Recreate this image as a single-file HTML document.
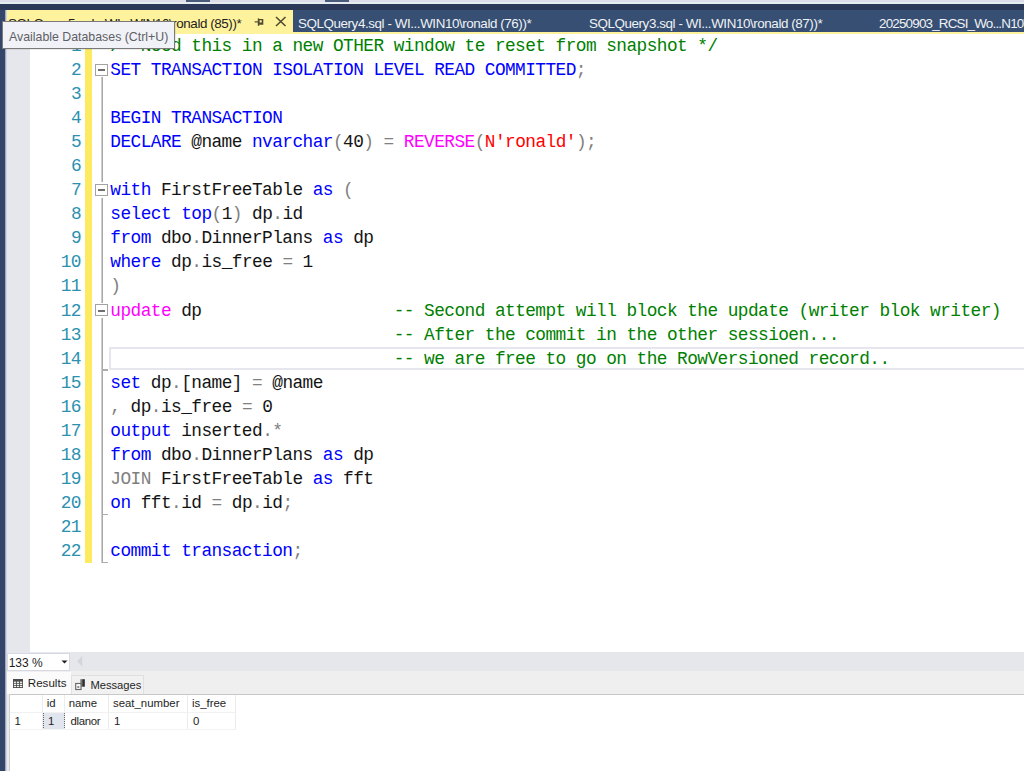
<!DOCTYPE html>
<html><head><meta charset="utf-8">
<style>
*{margin:0;padding:0;box-sizing:border-box}
html,body{width:1024px;height:771px;overflow:hidden;background:#fff;position:relative;font-family:"Liberation Sans",sans-serif}
.abs{position:absolute}
#topstrip{left:0;top:0;width:1024px;height:3px;background:#dcdde9}
#topline{left:0;top:2px;width:1024px;height:1.5px;background:#e6ebef}
#well{left:0;top:3.5px;width:1024px;height:6px;background:#2b3857}
#tabs{left:0;top:9.5px;width:1024px;height:22px;background:#364f72}
#ybar{left:0;top:31.5px;width:1024px;height:2px;background:#fff29d}
#leftdark{left:0;top:9.5px;width:7px;height:762px;background:linear-gradient(to right,#33466a 0,#33466a 4.6px,#a9b5ca 5.6px,#e6e7ec 7px)}
#acttab{left:5px;top:9.5px;width:287.5px;height:22px;background:#fff29d}
.tabtxt{font-size:13.4px;letter-spacing:-0.42px;top:15.6px;white-space:nowrap;color:#f0f2f6}
#margin{left:7px;top:33.5px;width:23px;height:619px;background:#e6e7ec}
.ln{position:absolute;left:30px;width:51px;text-align:right;color:#2b91af}
.code{position:absolute;left:110.3px;white-space:pre;color:#141414}
.mono{font-family:"Liberation Mono",monospace;font-size:17.8px;letter-spacing:-0.55px;line-height:24.06px;height:24.06px}
.k{color:#0000ff}.g{color:#808080}.c{color:#008000}.f{color:#ff00ff}.s{color:#ff0000}
#yellow{left:84.5px;top:33.5px;width:7.5px;height:529.3px;background:#fdea60}
.vline{position:absolute;left:101px;width:2px;border-left:1px solid #cdcdcd;background:#a9a9a9}
.tick{position:absolute;left:102px;width:6px;height:1.4px;background:#adadad}
.box{position:absolute;left:95px;width:13px;height:12px;border:1px solid #a3a3a3;background:#fff}
.box::after{content:"";position:absolute;left:2px;top:4.3px;width:7px;height:2px;background:#707070}
#curline{left:108.8px;top:346.5px;width:920px;height:23.5px;border:2px solid #e6e6ee}
#tooltip{left:1.5px;top:21.3px;width:173.5px;height:27.8px;border-bottom:1.5px solid #6e6e6e;background:#f1f2f7;border:1px solid #7a7a7a;box-shadow:1px 1px 0 rgba(0,0,0,.08)}
#tooltip span{position:absolute;left:6.5px;top:7.8px;font-size:12.35px;color:#5f5f66;white-space:nowrap}
#status{left:6.5px;top:652.2px;width:1018px;height:19px;background:#e5e7eb}
#zoombox{left:7px;top:652.5px;width:62.5px;height:18px;background:#fff;border:1px solid #d6d8e4}
#zoombox span{position:absolute;left:0.7px;top:2.3px;font-size:12px;color:#1e1e1e}
#tabrow{left:6.5px;top:671px;width:1018px;height:23px;background:#efefef}
#restab{left:7px;top:672px;width:64px;height:22.5px;background:#fbfbfb}
#msgtab{left:71.2px;top:675.3px;width:73px;height:19px;background:#f1f1f1;border:1px solid #e0e0e0;border-bottom:none}
#gridline{left:9px;top:694px;width:1015px;height:1.3px;background:#c8c8c8}
#gridleft{left:6.5px;top:694px;width:3px;height:77px;background:#e9eaee}
#gridleftb{left:9px;top:694px;width:1px;height:77px;background:#cfcfcf}
.gt{position:absolute;font-size:11.4px;color:#1e1e1e;white-space:nowrap}
.gsep{position:absolute;width:1px;background:#ececec}
</style></head><body>
<div id="topstrip" class="abs"></div>
<div id="topline" class="abs"></div>
<div id="well" class="abs"></div>
<div class="abs" style="left:186px;top:0;width:24px;height:2px;background:#4a5a7a"></div>
<div class="abs" style="left:325px;top:0;width:24px;height:2px;background:#4a5a7a"></div>
<div id="tabs" class="abs"></div>
<div id="acttab" class="abs"></div>
<div id="ybar" class="abs"></div>
<div class="abs tabtxt" style="left:8px;color:#1e1e1e">SQLQuery5.sql - WI...WIN10\ronald (85))*</div>
<div class="abs tabtxt" style="left:298px">SQLQuery4.sql - WI...WIN10\ronald (76))*</div>
<div class="abs tabtxt" style="left:589px">SQLQuery3.sql - WI...WIN10\ronald (87))*</div>
<div class="abs tabtxt" style="left:879px;letter-spacing:-0.8px">20250903_RCSI_Wo...N10\ronald (90))*</div>
<!-- pin & close -->
<svg class="abs" style="left:254px;top:18px" width="10" height="9" viewBox="0 0 10 9"><path fill-rule="evenodd" fill="#4f4a30" d="M4 1.1H9.3V6.7H4z M5.5 2.3H7.7V4.4H5.5z"/><rect x="3.8" y="0.4" width="1.4" height="7.4" fill="#4f4a30"/><rect x="0.7" y="3.3" width="3.3" height="1.2" fill="#4f4a30"/></svg>
<svg class="abs" style="left:275px;top:16px" width="12" height="11" viewBox="0 0 12 11"><path d="M1 1L10.5 10M10.5 1L1 10" stroke="#4f4a30" stroke-width="1.6" fill="none"/></svg>

<div id="leftdark" class="abs"></div>
<div id="margin" class="abs"></div>
<div id="yellow" class="abs"></div>

<div id="curline" class="abs"></div>
<div class="ln mono" style="top:34.00px">1</div>
<div class="code mono" style="top:34.00px"><span class="c">/* Need this in a new OTHER window te reset from snapshot */</span></div>
<div class="ln mono" style="top:58.00px">2</div>
<div class="code mono" style="top:58.00px"><span class="k">SET TRANSACTION ISOLATION LEVEL READ COMMITTED</span><span class="g">;</span></div>
<div class="ln mono" style="top:82.00px">3</div>
<div class="ln mono" style="top:106.00px">4</div>
<div class="code mono" style="top:106.00px"><span class="k">BEGIN TRANSACTION</span></div>
<div class="ln mono" style="top:130.00px">5</div>
<div class="code mono" style="top:130.00px"><span class="k">DECLARE</span> @name <span class="k">nvarchar</span><span class="g">(</span>40<span class="g">)</span><span class="g"> = </span><span class="f">REVERSE</span><span class="g">(</span><span class="s">N&#x27;ronald&#x27;</span><span class="g">)</span><span class="g">;</span></div>
<div class="ln mono" style="top:154.00px">6</div>
<div class="ln mono" style="top:178.00px">7</div>
<div class="code mono" style="top:178.00px"><span class="k">with</span> FirstFreeTable <span class="k">as</span><span class="g"> (</span></div>
<div class="ln mono" style="top:202.00px">8</div>
<div class="code mono" style="top:202.00px"><span class="k">select</span> <span class="k">top</span><span class="g">(</span>1<span class="g">)</span> dp<span class="g">.</span>id</div>
<div class="ln mono" style="top:226.00px">9</div>
<div class="code mono" style="top:226.00px"><span class="k">from</span> dbo<span class="g">.</span>DinnerPlans <span class="k">as</span> dp</div>
<div class="ln mono" style="top:250.00px">10</div>
<div class="code mono" style="top:250.00px"><span class="k">where</span> dp<span class="g">.</span>is_free <span class="g">=</span> 1</div>
<div class="ln mono" style="top:274.00px">11</div>
<div class="code mono" style="top:274.00px"><span class="g">)</span></div>
<div class="ln mono" style="top:299.00px">12</div>
<div class="code mono" style="top:299.00px"><span class="f">update</span> dp                   <span class="c">-- Second attempt will block the update (writer blok writer)</span></div>
<div class="ln mono" style="top:323.00px">13</div>
<div class="code mono" style="top:323.00px">                            <span class="c">-- After the commit in the other sessioen...</span></div>
<div class="ln mono" style="top:347.00px">14</div>
<div class="code mono" style="top:347.00px">                            <span class="c">-- we are free to go on the RowVersioned record..</span></div>
<div class="ln mono" style="top:371.00px">15</div>
<div class="code mono" style="top:371.00px"><span class="k">set</span> dp<span class="g">.</span>[name] <span class="g">=</span> @name</div>
<div class="ln mono" style="top:395.00px">16</div>
<div class="code mono" style="top:395.00px"><span class="g">,</span> dp<span class="g">.</span>is_free <span class="g">=</span> 0</div>
<div class="ln mono" style="top:419.00px">17</div>
<div class="code mono" style="top:419.00px"><span class="k">output</span> inserted<span class="g">.*</span></div>
<div class="ln mono" style="top:443.00px">18</div>
<div class="code mono" style="top:443.00px"><span class="k">from</span> dbo<span class="g">.</span>DinnerPlans <span class="k">as</span> dp</div>
<div class="ln mono" style="top:467.00px">19</div>
<div class="code mono" style="top:467.00px"><span class="g">JOIN</span> FirstFreeTable <span class="k">as</span> fft</div>
<div class="ln mono" style="top:491.00px">20</div>
<div class="code mono" style="top:491.00px"><span class="k">on</span> fft<span class="g">.</span>id <span class="g">=</span> dp<span class="g">.</span>id<span class="g">;</span></div>
<div class="ln mono" style="top:515.00px">21</div>
<div class="ln mono" style="top:539.00px">22</div>
<div class="code mono" style="top:539.00px"><span class="k">commit transaction</span><span class="g">;</span></div>
<div class="vline" style="top:77.20px;height:105.30px"></div>
<div class="vline" style="top:197.50px;height:105.30px"></div>
<div class="vline" style="top:317.80px;height:245.02px"></div>
<div class="tick" style="top:369.34px"></div>
<div class="tick" style="top:513.70px"></div>
<div class="tick" style="top:561.82px"></div>
<div class="box" style="top:63.70px"></div>
<div class="box" style="top:184.00px"></div>
<div class="box" style="top:304.30px"></div>
<div id="tooltip" class="abs"><span>Available Databases (Ctrl+U)</span></div>
<div id="status" class="abs"></div>
<div id="zoombox" class="abs"><span>133 %</span></div>
<svg class="abs" style="left:61px;top:659px" width="8" height="6" viewBox="0 0 8 6"><path d="M0.5 1.5h6l-3 3z" fill="#1e1e1e"/></svg>
<svg class="abs" style="left:76px;top:655px" width="8" height="12" viewBox="0 0 8 12"><path d="M6.2 1v10.5l-5.2-5.25z" fill="#d3d5dc"/></svg>
<div id="tabrow" class="abs"></div>
<div id="restab" class="abs"></div>
<div id="msgtab" class="abs"></div>
<svg class="abs" style="left:13px;top:678.5px" width="11" height="10" viewBox="0 0 11 10"><rect x="0" y="0" width="10" height="9" fill="#4a4a4a"/><rect x="0.90" y="2.60" width="2.2" height="1.3" fill="#f4f4f4"/><rect x="3.95" y="2.60" width="2.2" height="1.3" fill="#f4f4f4"/><rect x="7.00" y="2.60" width="2.2" height="1.3" fill="#f4f4f4"/><rect x="0.90" y="4.70" width="2.2" height="1.3" fill="#f4f4f4"/><rect x="3.95" y="4.70" width="2.2" height="1.3" fill="#f4f4f4"/><rect x="7.00" y="4.70" width="2.2" height="1.3" fill="#f4f4f4"/><rect x="0.90" y="6.80" width="2.2" height="1.3" fill="#f4f4f4"/><rect x="3.95" y="6.80" width="2.2" height="1.3" fill="#f4f4f4"/><rect x="7.00" y="6.80" width="2.2" height="1.3" fill="#f4f4f4"/></svg>
<div class="abs gt" style="left:27.8px;top:675.8px;font-size:11.6px">Results</div>
<svg class="abs" style="left:74px;top:678px" width="12" height="13" viewBox="0 0 12 13"><rect x="6.3" y="1.2" width="2.2" height="7.5" fill="#777"/><rect x="8.3" y="1.2" width="2.5" height="7.5" fill="#2a2a2a"/><rect x="1.7" y="5.5" width="5.3" height="6" fill="#fff" stroke="#6a6a6a" stroke-width="1.2"/><rect x="3.3" y="8" width="2" height="2" fill="#8a8a8a"/></svg>
<div class="abs gt" style="left:90.4px;top:678.5px;font-size:11.2px">Messages</div>
<div id="gridleft" class="abs"></div>
<div id="gridline" class="abs"></div>
<div id="gridleftb" class="abs"></div>
<div class="abs" style="left:42.5px;top:712px;width:22px;height:18px;background:#e1e6ee;border:1px dotted #6a6a6a"></div>
<div class="gsep" style="left:42px;top:695px;height:35px"></div>
<div class="gsep" style="left:64px;top:695px;height:17px"></div>
<div class="gsep" style="left:108px;top:695px;height:35px"></div>
<div class="gsep" style="left:187px;top:695px;height:35px"></div>
<div class="gsep" style="left:235px;top:695px;height:35px"></div>
<div class="abs" style="left:10px;top:712px;width:225px;height:1px;background:#f1f1f1"></div>
<div class="abs" style="left:10px;top:729px;width:225px;height:1px;background:#f3f3f3"></div>
<div class="abs gt" style="left:46.8px;top:697px">id</div>
<div class="abs gt" style="left:68.7px;top:697px">name</div>
<div class="abs gt" style="left:113px;top:697px">seat_number</div>
<div class="abs gt" style="left:192px;top:697px">is_free</div>
<div class="abs gt" style="left:14.5px;top:714.5px">1</div>
<div class="abs gt" style="left:48px;top:714.5px">1</div>
<div class="abs gt" style="left:70.5px;top:714.5px;letter-spacing:-0.3px">dlanor</div>
<div class="abs gt" style="left:114px;top:714.5px">1</div>
<div class="abs gt" style="left:193px;top:714.5px">0</div>

</body></html>
